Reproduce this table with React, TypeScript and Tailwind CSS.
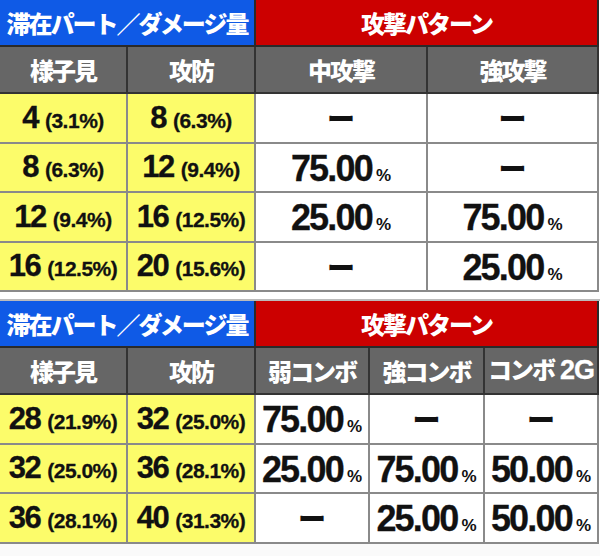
import type { ReactNode } from "react";

type Pair = [string, string];
type Row = { a: Pair; b: Pair; vals: (string | null)[]; h: string };

const jp = "font-['Noto_Sans_CJK_JP','Noto_Sans',sans-serif]";
const num = "font-['Liberation_Sans','Arial',sans-serif] [-webkit-text-stroke:0.3px_#111]";

const table1: Row[] = [
  { a: ["4", "3.1%"], b: ["8", "6.3%"], vals: [null, null], h: "h-[50px]" },
  { a: ["8", "6.3%"], b: ["12", "9.4%"], vals: ["75.00", null], h: "h-[49px]" },
  { a: ["12", "9.4%"], b: ["16", "12.5%"], vals: ["25.00", "75.00"], h: "h-[50px]" },
  { a: ["16", "12.5%"], b: ["20", "15.6%"], vals: [null, "25.00"], h: "h-[49px]" },
];

const table2: Row[] = [
  { a: ["28", "21.9%"], b: ["32", "25.0%"], vals: ["75.00", null, null], h: "h-[50px]" },
  { a: ["32", "25.0%"], b: ["36", "28.1%"], vals: ["25.00", "75.00", "50.00"], h: "h-[49px]" },
  { a: ["36", "28.1%"], b: ["40", "31.3%"], vals: [null, "25.00", "50.00"], h: "h-[50px]" },
];

function Cell({ w, className, children }: { w: string; className: string; children?: ReactNode }) {
  return (
    <div className={`${w} flex shrink-0 items-center justify-center border-r-2 border-b-2 ${className}`}>
      {children}
    </div>
  );
}

function Stay({ pair }: { pair: Pair }) {
  return (
    <span className={`${num} flex items-baseline whitespace-nowrap font-bold text-[#111]`}>
      <span className="text-[31px] tracking-[-1.5px]">{pair[0]}</span>
      <span className="ml-[7px] text-[21px] tracking-[-0.5px]">({pair[1]})</span>
    </span>
  );
}

function Rate({ value }: { value: string | null }) {
  if (!value) {
    return <span className={`${jp} text-[28px] font-black text-[#111]`}>ー</span>;
  }
  return (
    <span className={`${num} flex items-baseline whitespace-nowrap pt-[2px] font-bold text-[#111]`}>
      <span className="text-[36px] tracking-[-1.8px]">{value}</span>
      <span className="ml-[4px] text-[17px] [-webkit-text-stroke:0px]">%</span>
    </span>
  );
}

function Head({ children }: { children: ReactNode }) {
  return (
    <span className={`${jp} flex items-baseline whitespace-nowrap text-[24px] font-black tracking-[-2px] text-white`}>
      {children}
    </span>
  );
}

function headLabel(h: string) {
  const [jpText, latin] = h.split(" ");
  if (!latin) return h;
  return (
    <>
      {jpText}
      <span className="ml-[6px] font-['Liberation_Sans',sans-serif] text-[27px] font-bold tracking-[-1px] [-webkit-text-stroke:0.3px_#fff]">
        {latin}
      </span>
    </>
  );
}

function Table({ heads, widths, rows }: { heads: string[]; widths: string[]; rows: Row[] }) {
  return (
    <div className="flex w-[599px] flex-col">
      <div className="flex h-[47px]">
        <Cell w="w-[256px]" className="border-[#2a2a2a] bg-[#0f5ae6]">
          <Head>滞在パート／ダメージ量</Head>
        </Cell>
        <Cell w="flex-1" className="border-[#2a2a2a] bg-[#cc0000]">
          <Head>攻撃パターン</Head>
        </Cell>
      </div>
      <div className="flex h-[47px]">
        {["様子見", "攻防", ...heads].map((h, i) => (
          <Cell key={h} w={i < 2 ? "w-[128px]" : widths[i - 2]} className="border-[#333] bg-[#666]">
            <Head>{headLabel(h)}</Head>
          </Cell>
        ))}
      </div>
      {rows.map((r, ri) => (
        <div key={ri} className={`flex ${r.h}`}>
          <Cell w="w-[128px]" className="border-[#8a8a8a] bg-[#fcfc6a]">
            <Stay pair={r.a} />
          </Cell>
          <Cell w="w-[128px]" className="border-[#8a8a8a] bg-[#fcfc6a]">
            <Stay pair={r.b} />
          </Cell>
          {r.vals.map((v, vi) => (
            <Cell key={vi} w={widths[vi]} className="border-[#8a8a8a] bg-white">
              <Rate value={v} />
            </Cell>
          ))}
        </div>
      ))}
    </div>
  );
}

export default function App() {
  return (
    <div className="flex h-[556px] w-[600px] flex-col bg-white">
      <Table heads={["中攻撃", "強攻撃"]} widths={["w-[172px]", "flex-1"]} rows={table1} />
      <div className="h-[9px] border-b-2 border-[#bbb]" />
      <Table
        heads={["弱コンボ", "強コンボ", "コンボ 2G"]}
        widths={["w-[114px]", "w-[115px]", "flex-1"]}
        rows={table2}
      />
      <div className="flex-1 bg-[#fafafa]" />
    </div>
  );
}
